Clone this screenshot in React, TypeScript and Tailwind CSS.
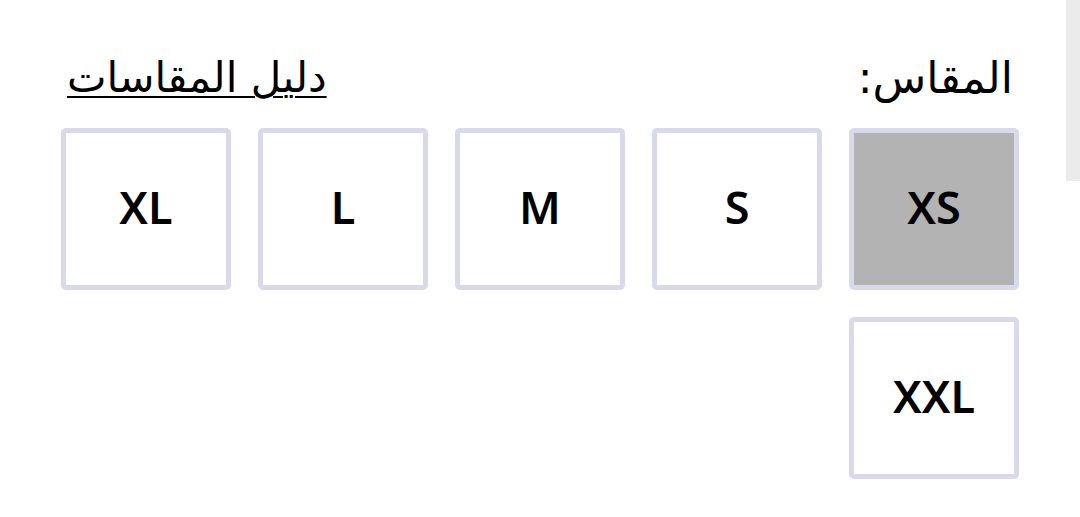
import React from "react";

const sizes = ["XS", "S", "M", "L", "XL", "XXL"];

export default function App() {
  const selected = "XS";

  return (
    <div className="relative h-[517px] w-[1080px] overflow-hidden bg-white">
      <div className="absolute right-0 top-0 h-[181px] w-[14px] bg-[#ebebeb]" />
      <div dir="rtl" className="px-[61px] pt-[48px]" style={{ fontFamily: '"DejaVu Sans", sans-serif' }}>
        <div className="flex items-center justify-between px-[6px] text-[44px] leading-[60px] text-black">
          <span>المقاس:</span>
          <a className="text-[42px] underline decoration-2 underline-offset-[4px]">دليل المقاسات</a>
        </div>
        <div className="mt-[20px] grid grid-cols-5 gap-[27px]">
          {sizes.map((s) => (
            <button
              key={s}
              type="button"
              className={
                "flex h-[162px] items-center justify-center rounded-[5px] border-[5px] border-[#d8d9ea] pb-[6px] text-[45px] font-semibold leading-none text-black " +
                (s === selected ? "bg-[#b3b3b3]" : "bg-white")
              }
              style={{ fontFamily: '"Noto Sans", sans-serif' }}
            >
              {s}
            </button>
          ))}
        </div>
      </div>
    </div>
  );
}
